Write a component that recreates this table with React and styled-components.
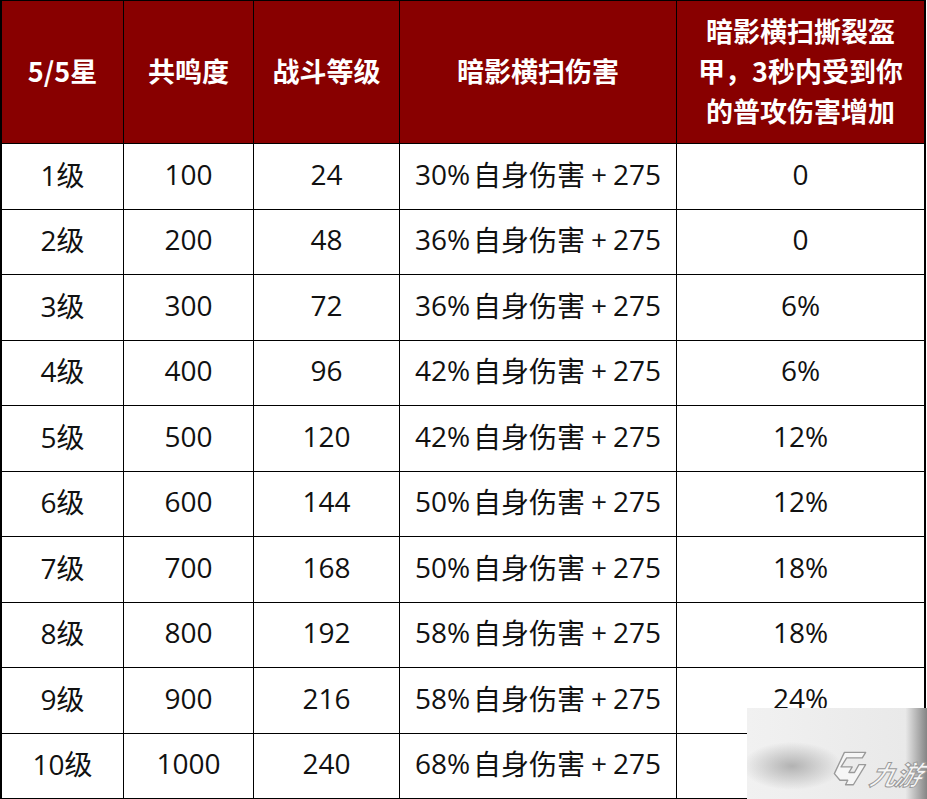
import React from 'react'
import styled, { createGlobalStyle } from 'styled-components'

const GlobalStyle = createGlobalStyle`
  html, body {
    margin: 0;
    padding: 0;
    background: #fff;
  }
  body {
    font-family: 'Open Sans', 'Noto Sans CJK SC', sans-serif;
  }
`

const headers = [
  '5/5星',
  '共鸣度',
  '战斗等级',
  '暗影横扫伤害',
  '暗影横扫撕裂盔甲，3秒内受到你的普攻伤害增加',
]

const rows = [
  ['1级', '100', '24', '30%自身伤害+275', '0'],
  ['2级', '200', '48', '36%自身伤害+275', '0'],
  ['3级', '300', '72', '36%自身伤害+275', '6%'],
  ['4级', '400', '96', '42%自身伤害+275', '6%'],
  ['5级', '500', '120', '42%自身伤害+275', '12%'],
  ['6级', '600', '144', '50%自身伤害+275', '12%'],
  ['7级', '700', '168', '50%自身伤害+275', '18%'],
  ['8级', '800', '192', '58%自身伤害+275', '18%'],
  ['9级', '900', '216', '58%自身伤害+275', '24%'],
  ['10级', '1000', '240', '68%自身伤害+275', ''],
]

const Page = styled.div`
  position: relative;
  width: 927px;
  height: 799px;
  overflow: hidden;
  background: #fff;
`

const Grid = styled.div`
  display: grid;
  grid-template-columns: 122px 130px 146px 277px 249px;
  grid-template-rows: 143px repeat(10, 65.5px);
  width: 926px;
  border-top: 1px solid #000;
  border-left: 2px solid #000;
  box-sizing: border-box;
`

const HeadCell = styled.div`
  display: flex;
  align-items: center;
  justify-content: center;
  text-align: center;
  background: #880000;
  color: #fff;
  font-family: 'Noto Sans CJK SC', sans-serif;
  font-weight: 700;
  font-size: 27px;
  line-height: 40px;
  padding: 0 14px 2px;
  border-right: 1px solid #000;
  border-bottom: 1px solid #000;
  box-sizing: border-box;
  ${p => p.$last && 'border-right-width: 2px;'}
`

const Cell = styled.div`
  display: flex;
  align-items: center;
  justify-content: center;
  color: #111;
  font-size: 28px;
  padding-bottom: 5px;
  border-right: 1px solid #000;
  border-bottom: 1px solid #000;
  box-sizing: border-box;
  white-space: nowrap;
  ${p => p.$last && 'border-right-width: 2px;'}
`

const Pct = styled.span`
  margin-right: 3px;
`

const Plus = styled.span`
  margin: 0 6px;
`

const Watermark = styled.div`
  position: absolute;
  right: 0;
  bottom: 0;
  width: 180px;
  height: 91px;
  background:
    radial-gradient(ellipse 50px 24px at 45px 58px, rgba(175, 175, 175, 0.95), rgba(215, 215, 215, 0) 100%),
    linear-gradient(to right, #f1f1f1 0%, #e9e9e9 88%, #858585 100%);
  display: flex;
  align-items: flex-end;
  justify-content: flex-end;
  padding: 0 6px 12px 0;
  box-sizing: border-box;
  gap: 2px;
`

const Brand = styled.span`
  font-family: 'Noto Sans CJK SC', sans-serif;
  font-style: italic;
  font-weight: 700;
  font-size: 27px;
  line-height: 1;
  color: #f6f6f6;
  -webkit-text-stroke: 1px #9a9a9a;
  transform: skewX(-14deg);
  letter-spacing: -2px;
`

const Logo = () => (
  <svg width="38" height="38" viewBox="0 0 34 34">
    <path
      d="M12 3 H31 L28 8 H14 L9 16 H19 L16 21 H21 L25 14 H31 L20 32 H13 L15 28 H8 L3 22 Z"
      fill="#f6f6f6"
      stroke="#9a9a9a"
      strokeWidth="1.2"
      strokeLinejoin="round"
    />
  </svg>
)

const renderValue = v => {
  const plus = v.indexOf('+')
  if (plus < 0) return v
  const pct = v.indexOf('%')
  return (
    <>
      <Pct>{v.slice(0, pct + 1)}</Pct>
      {v.slice(pct + 1, plus)}
      <Plus>+</Plus>
      {v.slice(plus + 1)}
    </>
  )
}

const App = () => (
  <Page>
    <GlobalStyle />
    <Grid>
      {headers.map((h, i) => (
        <HeadCell key={h} $last={i === headers.length - 1}>
          {h}
        </HeadCell>
      ))}
      {rows.map((r, ri) =>
        r.map((v, ci) => (
          <Cell key={ri + '-' + ci} $last={ci === r.length - 1}>
            {renderValue(v)}
          </Cell>
        ))
      )}
    </Grid>
    <Watermark>
      <Logo />
      <Brand>九游</Brand>
    </Watermark>
  </Page>
)

export default App
